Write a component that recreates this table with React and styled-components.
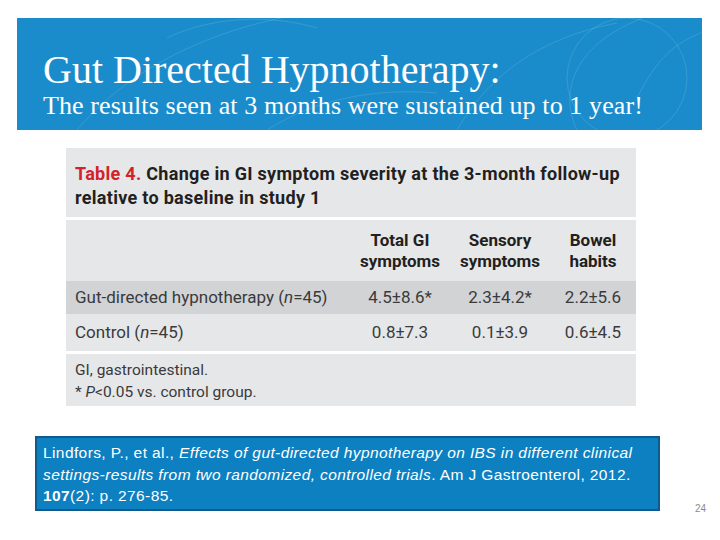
import React from 'react';
import styled, { createGlobalStyle } from 'styled-components';

const GlobalStyle = createGlobalStyle`
  html, body { margin: 0; padding: 0; background: #fff; }
  * { box-sizing: border-box; }
`;

const Slide = styled.div`
  width: 720px;
  height: 540px;
  position: relative;
  overflow: hidden;
  background: #fff;
  padding: 18px 18px 0 17px;
  display: flex;
  flex-direction: column;
`;

const Banner = styled.header`
  position: relative;
  height: 112px;
  width: 685px;
  background: #1b8ccb;
  overflow: hidden;
  padding: 30px 0 0 26px;
  color: #fff;
  font-family: "Liberation Serif", "Times New Roman", serif;
`;

const Swirls = styled.svg`
  position: absolute;
  inset: 0;
  pointer-events: none;
`;

const Title = styled.h1`
  position: relative;
  margin: 0;
  font-weight: 400;
  font-size: 40px;
  line-height: 44px;
  letter-spacing: 0;
`;

const Subtitle = styled.div`
  position: relative;
  font-size: 26px;
  line-height: 28px;
  margin-top: 0;
  letter-spacing: 0.1px;
`;

const TableWrap = styled.section`
  width: 570px;
  margin: 18px 0 0 49px;
  font-family: Roboto, "Liberation Sans", sans-serif;
  color: #3a3a3c;
  display: flex;
  flex-direction: column;
  gap: 3px;
`;

const Caption = styled.div`
  background: #e6e7e8;
  height: 69px;
  padding: 14px 10px 0 9px;
  font-weight: 700;
  font-size: 18px;
  line-height: 24px;
  letter-spacing: 0.3px;
  color: #231f20;
  white-space: nowrap;
`;

const Red = styled.span`
  color: #d2232a;
`;

const Grid = styled.div`
  background: #e6e7e8;
  display: grid;
  grid-template-columns: 1fr 100px 100px 86px;
  padding-left: 9px;
`;

const Cell = styled.div`
  display: flex;
  align-items: center;
  justify-content: ${({ $label }) => ($label ? 'flex-start' : 'center')};
  text-align: center;
  height: ${({ $h }) => $h}px;
  background: ${({ $shade }) => ($shade ? '#d2d3d5' : 'transparent')};
  margin-left: ${({ $label }) => ($label ? '-9px' : '0')};
  padding-left: ${({ $label }) => ($label ? '9px' : '0')};
  font-size: 17px;
  font-weight: ${({ $head }) => ($head ? 700 : 400)};
  line-height: 21px;
  white-space: nowrap;
  color: ${({ $head }) => ($head ? '#231f20' : '#3a3a3c')};
`;

const Footnote = styled.div`
  background: #e6e7e8;
  height: 52px;
  padding: 5px 9px 0;
  font-size: 15.5px;
  line-height: 22px;
`;

const Citation = styled.div`
  width: 625px;
  height: 75px;
  margin: 30px 0 0 18px;
  background: #0c80c1;
  border: 2px solid #0e5b8c;
  padding: 4px 6px 0 6px;
  color: #fff;
  font-family: "Liberation Sans", Arial, sans-serif;
  font-size: 15.5px;
  line-height: 21.5px;
  letter-spacing: 0.4px;
  white-space: nowrap;
`;

const PageNum = styled.div`
  position: absolute;
  right: 14px;
  bottom: 26px;
  font-family: "Liberation Sans", Arial, sans-serif;
  font-size: 10px;
  color: #8a8a8a;
`;

const rows = [
  { label: <>Gut-directed hypnotherapy (<i>n</i>=45)</>, vals: ['4.5±8.6*', '2.3±4.2*', '2.2±5.6'], shade: true, h: 33 },
  { label: <>Control (<i>n</i>=45)</>, vals: ['0.8±7.3', '0.1±3.9', '0.6±4.5'], shade: false, h: 37 },
];

export default function App() {
  return (
    <>
      <GlobalStyle />
      <Slide>
        <Banner>
          <Swirls width="685" height="112" viewBox="0 0 685 112">
            <g fill="none" stroke="#ffffff" strokeOpacity="0.12" strokeWidth="1">
              <path d="M60 112 C 120 40, 220 0, 330 -10" />
              <path d="M150 20 C 190 0, 250 -5, 300 10" />
              <path d="M440 112 C 470 60, 520 20, 600 5" />
              <path d="M560 112 C 540 70, 560 20, 640 -5" />
              <path d="M620 80 C 640 40, 660 20, 700 10" />
              <path d="M250 112 C 300 80, 360 70, 420 75" />
              <circle cx="610" cy="60" r="60" />
            </g>
          </Swirls>
          <Title>Gut Directed Hypnotherapy:</Title>
          <Subtitle>The results seen at 3 months were sustained up to 1 year!</Subtitle>
        </Banner>

        <TableWrap>
          <Caption>
            <Red>Table 4.</Red> Change in GI symptom severity at the 3-month follow-up
            <br />
            relative to baseline in study 1
          </Caption>
          <Grid>
            <Cell $label $h={61} />
            <Cell $head $h={61}>Total GI<br />symptoms</Cell>
            <Cell $head $h={61}>Sensory<br />symptoms</Cell>
            <Cell $head $h={61}>Bowel<br />habits</Cell>
            {rows.map((r, i) => (
              <React.Fragment key={i}>
                <Cell $label $shade={r.shade} $h={r.h}>{r.label}</Cell>
                {r.vals.map((v) => (
                  <Cell key={v} $shade={r.shade} $h={r.h}>{v}</Cell>
                ))}
              </React.Fragment>
            ))}
          </Grid>
          <Footnote>
            GI, gastrointestinal.
            <br />
            * <i>P</i>&lt;0.05 vs. control group.
          </Footnote>
        </TableWrap>

        <Citation>
          Lindfors, P., et al., <i>Effects of gut-directed hypnotherapy on IBS in different clinical</i>
          <br />
          <i>settings-results from two randomized, controlled trials</i>. Am J Gastroenterol, 2012.
          <br />
          <b>107</b>(2): p. 276-85.
        </Citation>
        <PageNum>24</PageNum>
      </Slide>
    </>
  );
}
